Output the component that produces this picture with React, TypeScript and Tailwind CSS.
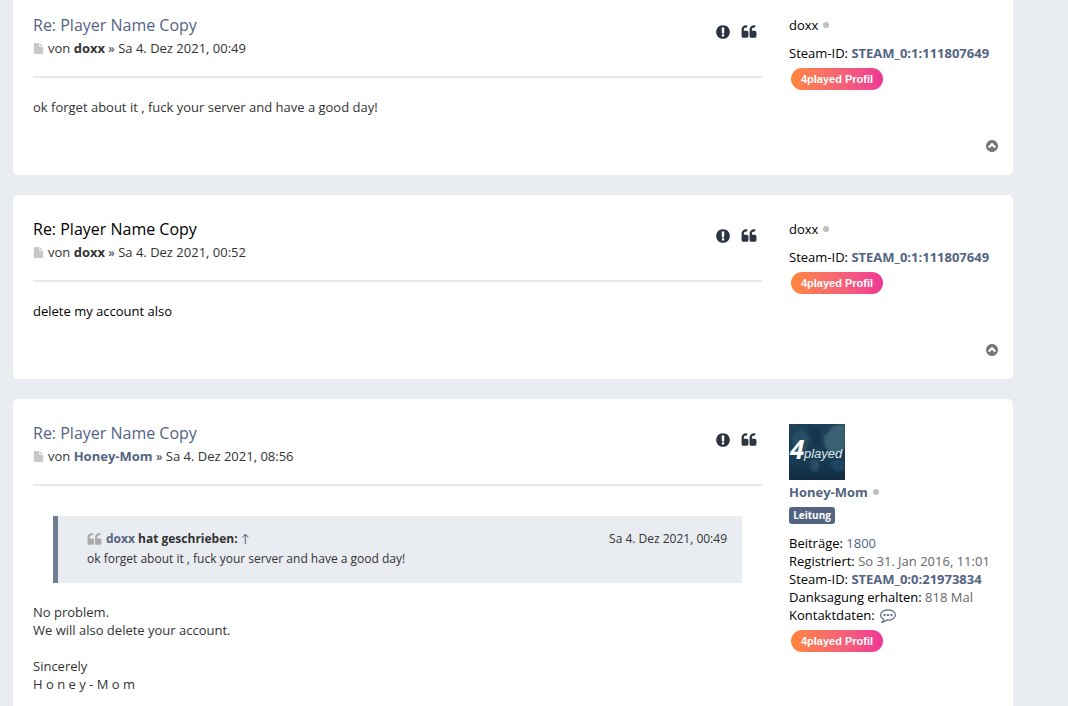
import type { ReactNode } from 'react';

// Font Awesome 4 glyphs on their 1792 grid
const iconPaths = {
  quote:
    'M832 960v384q0 80-56 136t-136 56h-384q-80 0-136-56t-56-136v-704q0-104 40.5-198.5t109.5-163.5 163.5-109.5 198.5-40.5h64q26 0 45 19t19 45v128q0 26-19 45t-45 19h-64q-106 0-181 75t-75 181v32q0 40 28 68t68 28h224q80 0 136 56t56 136zm896 0v384q0 80-56 136t-136 56h-384q-80 0-136-56t-56-136v-704q0-104 40.5-198.5t109.5-163.5 163.5-109.5 198.5-40.5h64q26 0 45 19t19 45v128q0 26-19 45t-45 19h-64q-106 0-181 75t-75 181v32q0 40 28 68t68 28h224q80 0 136 56t56 136z',
  report:
    'M896 128q209 0 385.5 103t279.5 279.5 103 385.5-103 385.5-279.5 279.5-385.5 103-385.5-103-279.5-279.5-103-385.5 103-385.5 279.5-279.5 385.5-103zm128 1247v-190q0-14-9-23.5t-22-9.5h-192q-13 0-23 10t-10 23v190q0 13 10 23t23 10h192q13 0 22-9.5t9-23.5zm-2-344l18-621q0-12-10-18-10-8-24-8h-220q-14 0-24 8-10 6-10 18l17 621q0 10 10 17.5t24 7.5h185q14 0 23.5-7.5t10.5-17.5z',
  up: 'M1273 1139l102-102q19-19 19-45t-19-45l-434-434q-19-19-45-19t-45 19l-434 434q-19 19-19 45t19 45l102 102q19 19 45 19t45-19l287-287 287 287q19 19 45 19t45-19zM896 128q209 0 385.5 103t279.5 279.5 103 385.5-103 385.5-279.5 279.5-385.5 103-385.5-103-279.5-279.5-103-385.5 103-385.5 279.5-279.5 385.5-103z',
  file: 'M1152 512v-472q22 14 36 28l408 408q14 14 28 36h-472zm-128 32q0 40 28 68t68 28h544v1056q0 40-28 68t-68 28h-1344q-40 0-68-28t-28-68v-1600q0-40 28-68t68-28h800v544z',
  comment:
    'M640 896q0 53-37.5 90.5t-90.5 37.5-90.5-37.5-37.5-90.5 37.5-90.5 90.5-37.5 90.5 37.5 37.5 90.5zm384 0q0 53-37.5 90.5t-90.5 37.5-90.5-37.5-37.5-90.5 37.5-90.5 90.5-37.5 90.5 37.5 37.5 90.5zm384 0q0 53-37.5 90.5t-90.5 37.5-90.5-37.5-37.5-90.5 37.5-90.5 90.5-37.5 90.5 37.5 37.5 90.5zm-512-512q-204 0-381.5 69.5t-282 187.5-104.5 255q0 112 71.5 213.5t201.5 175.5l87 50-27 96q-24 91-70 172 152-63 275-171l43-38 57 6q69 8 130 8 204 0 381.5-69.5t282-187.5 104.5-255-104.5-255-282-187.5-381.5-69.5zm896 512q0 174-120 321.5t-326 233-450 85.5q-70 0-145-8-198 175-460 242-49 14-114 22h-5q-15 0-27-10.5t-16-27.5v-1q-3-4-.5-12t2-10 4.5-9.5l6-9 7-8.5 8-9q7-8 31-34.5t34.5-38 31-39.5 32.5-51 27-59 26-76q-157-89-247.5-220t-90.5-281q0-174 120-321.5t326-233 450-85.5 450 85.5 326 233 120 321.5z',
};

interface IconProps {
  name: keyof typeof iconPaths;
  className: string;
}

function Icon({ name, className }: IconProps) {
  return (
    <svg viewBox="0 0 1792 1792" fill="currentColor" fillRule="evenodd" aria-hidden="true" className={className}>
      <path d={iconPaths[name]} />
    </svg>
  );
}

function Avatar() {
  return (
    <svg viewBox="0 0 56 56" className="block size-14" role="img" aria-label="4played">
      <defs>
        <linearGradient id="sea" x1="0" y1="0" x2="0" y2="1">
          <stop offset="0" stopColor="#1d4159" />
          <stop offset="0.6" stopColor="#193c55" />
          <stop offset="1" stopColor="#102a41" />
        </linearGradient>
        <filter id="haze">
          <feGaussianBlur stdDeviation="1" />
        </filter>
      </defs>
      <rect width="56" height="56" fill="url(#sea)" />
      <g filter="url(#haze)">
        <path d="M35 12l4-3 4-6 6-2 7-1v25l-5 3-9 2-6-8z" fill="#4f7787" opacity="0.6" />
        <path d="M3 12l10-8 7 9-3 15-12 3z" fill="#315b72" opacity="0.5" />
        <path d="M21 36h9v9l-3 4-5-3z" fill="#315b72" opacity="0.6" />
        <path d="M20 2l12 3-2 18-7-2z" fill="#102c42" opacity="0.6" />
        <path d="M40 40l8-5 8 4v7l-9 2z" fill="#24506a" opacity="0.6" />
      </g>
      <text x="1" y="35" fill="#fff" fontSize="26" fontWeight="700" fontStyle="italic" fontFamily="Open Sans, sans-serif">
        4
      </text>
      <text x="15" y="34" fill="#dfe8ed" fontSize="13" fontStyle="italic" fontFamily="Liberation Sans, sans-serif">
        played
      </text>
    </svg>
  );
}

function ProfileButton() {
  return (
    <button
      type="button"
      className="mt-[6px] ml-[2px] block h-[22px] w-[92px] rounded-full bg-linear-to-r from-[#ff8638] to-[#ee3795] text-center font-['Liberation_Sans',sans-serif] text-[11px] font-bold text-white"
    >
      4played Profil
    </button>
  );
}

interface PostProps {
  author: string;
  date: string;
  tone: 'first' | 'unread' | 'member';
  profile: ReactNode;
  children: ReactNode;
}

const cardClasses = {
  first: '-mt-[9px] min-h-[184px]',
  unread: 'min-h-[184px]',
  member: 'min-h-[360px]',
};

const titleClasses = {
  first: 'text-[#536482]',
  unread: 'text-black',
  member: 'text-[#536482]',
};

const bodyClasses = {
  first: 'text-[#333333]',
  unread: 'text-black',
  member: 'text-[#333333]',
};

const authorClasses = {
  first: 'text-[#333333]',
  unread: 'text-[#333333]',
  member: 'text-[#536482]',
};

function Post({ author, date, tone, profile, children }: PostProps) {
  return (
    <article className={`flex rounded-[5px] bg-white pt-5 pr-[14px] pb-[22px] pl-5 ${cardClasses[tone]}`}>
      <div className="min-w-0 flex-1">
        <header className="flex items-start justify-between border-b-2 border-[#e8e8e8] pr-[5px] pb-[19px]">
          <div>
            <h3 className="text-[16px] leading-[28px]">
              <a href="#post" className={titleClasses[tone]}>
                Re: Player Name Copy
              </a>
            </h3>
            <p className="flex items-center leading-[18px] text-[#333333]">
              <Icon name="file" className="mr-[4px] size-[11px] text-[#c8c8c8]" />
              <span>
                von <strong className={authorClasses[tone]}>{author}</strong> » {date}
              </span>
            </p>
          </div>
          <div className="flex h-[42px] items-center gap-[10px] text-[#2b3440]">
            <button type="button" aria-label="Beitrag melden">
              <Icon name="report" className="block size-4" />
            </button>
            <button type="button" aria-label="Zitieren">
              <Icon name="quote" className="block size-4" />
            </button>
          </div>
        </header>
        <div className={`pt-5 leading-[18px] ${bodyClasses[tone]}`}>{children}</div>
      </div>

      <aside className="flex w-[237px] flex-col pt-[5px] pl-[27px] leading-[18px] text-black">
        {profile}
        <a href="#top" aria-label="Nach oben" className="mt-auto self-end text-[#777777]">
          <Icon name="up" className="block size-[14px]" />
        </a>
      </aside>
    </article>
  );
}

function OfflineDot() {
  return <span className="ml-[5px] size-[6px] rounded-full bg-[#c0c0c0]" />;
}

function GuestProfile() {
  return (
    <div>
      <div className="flex items-center">
        doxx
        <OfflineDot />
      </div>
      <div className="mt-[10px]">
        Steam-ID:{' '}
        <a href="#steam" className="font-bold text-[#536482]">
          STEAM_0:1:111807649
        </a>
      </div>
      <ProfileButton />
    </div>
  );
}

function LeaderProfile() {
  return (
    <div>
      <Avatar />
      <div className="mt-[3px] flex items-center">
        <a href="#honey-mom" className="font-bold text-[#536482]">
          Honey-Mom
        </a>
        <OfflineDot />
      </div>
      <div className="mt-[6px] h-[17px] w-[46px] rounded-[3px] bg-[#536482] text-center text-[10px] leading-[17px] font-bold text-white">
        Leitung
      </div>
      <div className="mt-[10px]">
        Beiträge: <a href="#posts" className="text-[#536482]">1800</a>
      </div>
      <div>
        Registriert: <span className="text-[#666666]">So 31. Jan 2016, 11:01</span>
      </div>
      <div>
        Steam-ID:{' '}
        <a href="#steam" className="font-bold text-[#536482]">
          STEAM_0:0:21973834
        </a>
      </div>
      <div>
        Danksagung erhalten: <span className="text-[#666666]">818 Mal</span>
      </div>
      <div className="flex items-center">
        Kontaktdaten:
        <a href="#contact" aria-label="Kontakt" className="ml-[5px] text-[#536482]">
          <Icon name="comment" className="block size-4" />
        </a>
      </div>
      <ProfileButton />
    </div>
  );
}

export default function App() {
  return (
    <main className="flex h-screen flex-col overflow-hidden bg-[#e9ecf1] pr-[55px] pl-[13px] font-['Open_Sans',sans-serif] text-[13px]">
      <div className="flex flex-col gap-5">
        <Post author="doxx" date="Sa 4. Dez 2021, 00:49" tone="first" profile={<GuestProfile />}>
          <p>ok forget about it , fuck your server and have a good day!</p>
        </Post>

        <Post author="doxx" date="Sa 4. Dez 2021, 00:52" tone="unread" profile={<GuestProfile />}>
          <p>delete my account also</p>
        </Post>

        <Post author="Honey-Mom" date="Sa 4. Dez 2021, 08:56" tone="member" profile={<LeaderProfile />}>
          <blockquote className="mx-5 mt-[10px] mb-5 border-l-[5px] border-[#6f7f92] bg-[#e9ecf1] pt-[13px] pr-[15px] pb-[14px] pl-[29px] text-[12px] leading-[20px]">
            <div className="flex h-5 items-center">
              <Icon name="quote" className="mr-[4px] size-[15px] text-[#aaaaaa]" />
              <cite className="font-bold not-italic">
                <a href="#doxx" className="text-[#536482]">doxx</a> hat geschrieben:{' '}
                <a href="#post" className="font-['Lato',sans-serif] font-normal text-[#536482]">↑</a>
              </cite>
              <time className="ml-auto">Sa 4. Dez 2021, 00:49</time>
            </div>
            <p>ok forget about it , fuck your server and have a good day!</p>
          </blockquote>
          <p>No problem.</p>
          <p>We will also delete your account.</p>
          <p className="mt-[18px]">Sincerely</p>
          <p>H o n e y - M o m</p>
        </Post>
      </div>
    </main>
  );
}
